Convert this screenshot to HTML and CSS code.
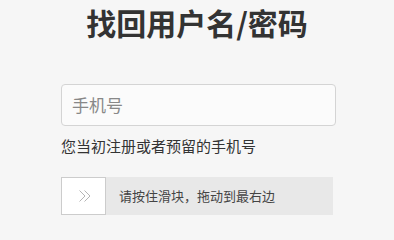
FILE: index.html
```html
<!DOCTYPE html>
<html lang="zh-CN">
<head>
<meta charset="utf-8">
<link rel="stylesheet" href="styles.css">
</head>
<body>
<div class="page">
  <h1 class="title">找回用户名/密码</h1>
  <div class="form">
    <div class="input">手机号</div>
    <p class="hint">您当初注册或者预留的手机号</p>
    <div class="slider">
      <div class="handle">
        <svg class="chev" width="14" height="14" viewBox="0 0 14 14"><path d="M1.5 1.5l5.5 5.5-5.5 5.5M6.5 1.5l5.5 5.5-5.5 5.5" fill="none" stroke="#b5b5b5" stroke-width="1"/></svg>
      </div>
      <div class="track">请按住滑块，拖动到最右边</div>
    </div>
  </div>
</div>
</body>
</html>
```
FILE: styles.css
```css
html, body {
  margin: 0;
  padding: 0;
  background: #f6f6f6;
  font-family: "Noto Sans CJK SC", "Noto Sans", sans-serif;
  color: #333;
}
.page {
  width: 394px;
  height: 229px;
  overflow: hidden;
}
.title {
  margin: 0;
  padding-top: 4px;
  text-align: center;
  font-size: 30px;
  line-height: 36px;
  font-weight: bold;
  color: #333;
}
.form {
  margin-left: 61px;
  padding-top: 44px;
}
.input {
  box-sizing: border-box;
  width: 275px;
  height: 42px;
  border: 1px solid #d4d4d4;
  border-radius: 4px;
  background: #fbfbfb;
  padding-left: 10px;
  font-size: 17px;
  line-height: 40px;
  color: #888;
}
.hint {
  margin: 0;
  padding-top: 10px;
  font-size: 15px;
  line-height: 20px;
  color: #333;
}
.slider {
  margin-top: 21px;
  display: flex;
  width: 272px;
  height: 38px;
  background: #e8e8e8;
}
.handle {
  box-sizing: border-box;
  width: 45px;
  height: 38px;
  background: #fff;
  border: 1px solid #ccc;
  display: flex;
  align-items: center;
  justify-content: center;
}
.chev {
  margin-left: 2px;
}
.track {
  padding-left: 13px;
  font-size: 13px;
  line-height: 38px;
  color: #444;
}
```
